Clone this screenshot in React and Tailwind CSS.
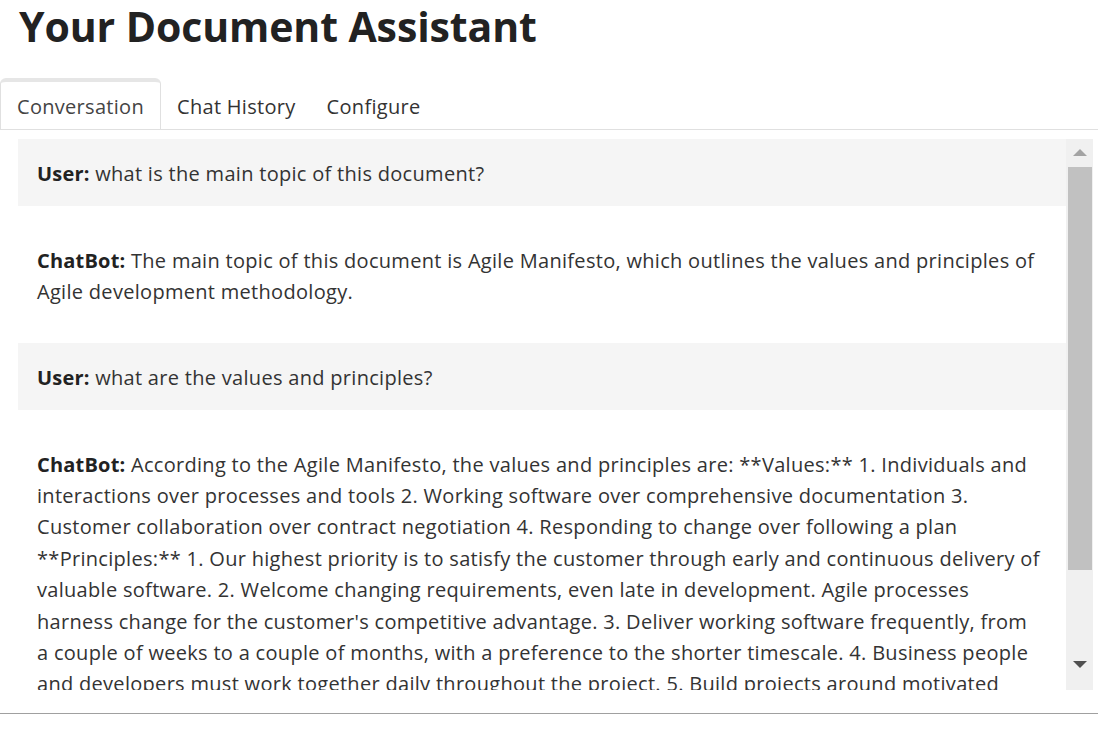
import React from "react";

const font = { fontFamily: '"Open Sans", "Noto Sans", Arial, sans-serif' };

function Msg({ who, user, children }) {
  return (
    <div
      className={
        user
          ? "bg-[#f5f5f5] pl-[19px] pr-[16px] pt-[19px] pb-[16.6px]"
          : "bg-white pl-[19px] pr-[16px] pt-[38.5px] pb-[35.7px]"
      }
    >
      <p className="text-[20px] leading-[31.4px] tracking-[0.3px] text-[#333333]">
        <b className="font-bold text-[#222222] tracking-[0.2px]">{who}:</b> {children}
      </p>
    </div>
  );
}

export default function App() {
  return (
    <div
      className="w-[1098px] h-[732px] bg-white overflow-hidden flex flex-col"
      style={font}
    >
      <h1 className="pl-[19px] pt-[1px] text-[41px] leading-[50px] font-bold text-[#222222] tracking-[-0.1px]">
        Your Document Assistant
      </h1>
      <div className="mt-[27px] flex border-b border-[#e0e0e0] h-[52px] text-[20px] tracking-[0.3px]">
        <div className="h-[52px] px-[16px] pt-[2px] flex items-center border border-[#e0e0e0] border-t-[4px] border-t-[#e6e6e6] rounded-t-[6px] text-[#444444] bg-white">
          Conversation
        </div>
        <div className="h-[52px] px-[16px] pt-[6px] flex items-center text-[#333333]">
          Chat History
        </div>
        <div className="h-[52px] px-[15px] pt-[6px] flex items-center text-[#333333]">
          Configure
        </div>
      </div>
      <div className="mt-[9px] ml-[18px] flex h-[551px] w-[1075px]">
        <div className="w-[1048px] h-full overflow-hidden">
          <Msg who="User" user>
            what is the main topic of this document?
          </Msg>
          <Msg who="ChatBot">
            The main topic of this document is Agile Manifesto, which outlines
            the values and principles of Agile development methodology.
          </Msg>
          <Msg who="User" user>
            what are the values and principles?
          </Msg>
          <Msg who="ChatBot">
            According to the Agile Manifesto, the values and principles are:
            **Values:** 1. Individuals and interactions over processes and tools
            2. Working software over comprehensive documentation 3. Customer
            collaboration over contract negotiation 4. Responding to change over
            following a plan **Principles:** 1. Our highest priority is to
            satisfy the customer through early and continuous delivery of
            valuable software. 2. Welcome changing requirements, even late in
            development. Agile processes harness change for the customer's
            competitive advantage. 3. Deliver working software frequently, from
            <br />
            a couple of weeks to a couple of months, with a preference to the
            shorter timescale. 4. Business people and developers must work
            together daily throughout the project. 5. Build projects around
            motivated individuals. Give them the environment and support they
            need, and trust them to get the job done.
          </Msg>
        </div>
        <div className="w-[27px] h-full bg-[#f0f0f0] flex flex-col items-center">
          <div className="h-[28px] w-full flex items-center justify-center">
            <svg width="14" height="8" viewBox="0 0 14 8">
              <polygon points="7,0 14,7 0,7" fill="#a3a3a3" />
            </svg>
          </div>
          <div className="w-[24px] h-[403px] bg-[#c1c1c1]" />
          <div className="flex-1" />
          <div className="h-[30px] w-full flex items-start justify-center pt-[1px]">
            <svg width="14" height="8" viewBox="0 0 14 8">
              <polygon points="0,0 14,0 7,7" fill="#505050" />
            </svg>
          </div>
        </div>
      </div>
      <div className="mt-[23px] h-px w-full bg-[#a0a0a0]" />
    </div>
  );
}
